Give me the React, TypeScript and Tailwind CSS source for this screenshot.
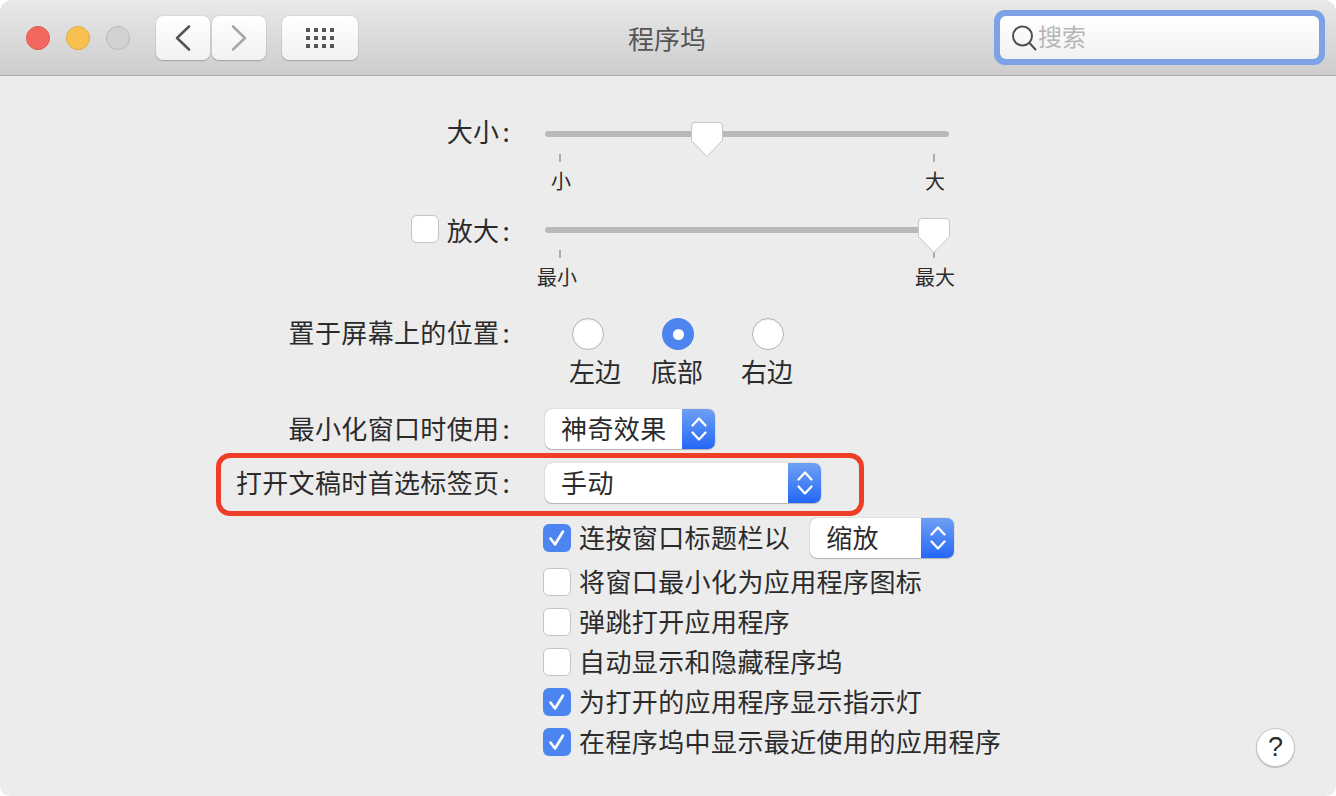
const Chevrons = () => (
  <svg width="18" height="30" viewBox="0 0 18 30" fill="none" stroke="white" strokeWidth="2.3" strokeLinecap="round" strokeLinejoin="round">
    <path d="M2.5 11.5 9 4.5l6.5 7" />
    <path d="M2.5 18.5 9 25.5l6.5-7" />
  </svg>
);

const Popup = ({ text, width }: { text: string; width: string }) => (
  <div className={`${width} h-10 flex rounded-[7px] bg-white shadow-[0_0_1px_rgba(0,0,0,0.45),0_1px_1px_rgba(0,0,0,0.2)] overflow-hidden`}>
    <div className="flex-1 pl-4 pb-1 flex items-center tracking-[0.4px]">{text}</div>
    <div className="w-[33px] flex items-center justify-center bg-gradient-to-b from-[#6f9ff3] to-[#2266f6]">
      <Chevrons />
    </div>
  </div>
);

const Checkbox = ({ checked }: { checked?: boolean }) =>
  checked ? (
    <div className="w-7 h-7 rounded-[6px] bg-[#4c84f0] flex items-center justify-center shrink-0">
      <svg width="20" height="20" viewBox="0 0 20 20" fill="none" stroke="white" strokeWidth="2.6" strokeLinecap="round" strokeLinejoin="round">
        <path d="M3.5 10.5 8 16.5 16 3.5" />
      </svg>
    </div>
  ) : (
    <div className="w-7 h-7 rounded-[6px] bg-white border border-[#c4c4c4] shrink-0" />
  );

const Radio = ({ checked }: { checked?: boolean }) =>
  checked ? (
    <div className="w-8 h-8 rounded-full bg-[#4c84f0] flex items-center justify-center">
      <div className="w-[11px] h-[11px] rounded-full bg-white" />
    </div>
  ) : (
    <div className="w-8 h-8 rounded-full bg-white border border-[#b4b4b4] shadow-[inset_0_1px_2px_rgba(0,0,0,0.08)]" />
  );

const Label = ({ text, className, children }: { text: string; className?: string; children?: React.ReactNode }) => (
  <div className={`w-[512px] shrink-0 h-[34px] flex items-center justify-end tracking-[0.35px] pr-[2px] ${className ?? ""}`}>
    {children}
    <span>{text}</span>
    <span className="ml-[3px]">:</span>
  </div>
);

const Thumb = ({ left }: { left: string }) => (
  <svg className={`absolute top-[5px] ${left}`} width="34" height="38" viewBox="0 0 34 38">
    <path
      d="M5 1.5h24a3.5 3.5 0 0 1 3.5 3.5v14.5L17 35.5 1.5 19.5V5A3.5 3.5 0 0 1 5 1.5Z"
      fill="white"
      stroke="#c6c6c6"
      strokeWidth="1"
    />
  </svg>
);

const SliderRow = ({
  label,
  left,
  right,
  textClass,
  labelClass,
  thumbLeft,
  check,
}: {
  label: string;
  left: string;
  right: string;
  textClass: string;
  labelClass?: string;
  thumbLeft: string;
  check?: boolean;
}) => (
  <div className="flex">
    <Label text={label} className={labelClass}>
      {check && <div className="mr-2"><Checkbox /></div>}
    </Label>
    <div className="relative ml-[33px] w-[404px]">
      <div className="mt-[15px] h-[6px] rounded-full bg-[#b9b9b9]" />
      <div className="mt-[17px] mx-[14px] flex justify-between">
        <div className="w-[2px] h-2 bg-[#ababab]" />
        <div className="w-[2px] h-2 bg-[#ababab]" />
      </div>
      <div className={`mt-[7px] flex justify-between text-[20px] leading-[24px] ${textClass}`}>
        <span>{left}</span>
        <span>{right}</span>
      </div>
      <Thumb left={thumbLeft} />
    </div>
  </div>
);

const CheckRow = ({ text, checked, children, className }: { text: string; checked?: boolean; children?: React.ReactNode; className: string }) => (
  <div className={`flex items-center pl-[543px] ${className}`}>
    <Checkbox checked={checked} />
    <span className="ml-2 pb-[2px] tracking-[0.4px] leading-[34px]">{text}</span>
    {children}
  </div>
);

const NavButton = ({ className, children }: { className: string; children: React.ReactNode }) => (
  <div className={`h-11 rounded-[7px] flex items-center justify-center bg-gradient-to-b from-white to-[#f1f1f1] shadow-[0_0_1px_rgba(0,0,0,0.45),0_1px_1px_rgba(0,0,0,0.2)] ${className}`}>
    {children}
  </div>
);

export default function App() {
  return (
    <div className="w-[1336px] h-[796px] bg-white font-['Noto_Sans_CJK_SC','Liberation_Sans',sans-serif] text-[26px] text-[#2b2b2b] overflow-hidden">
      <div className="relative h-full rounded-t-[12px] rounded-b-[10px] bg-[#ececec] overflow-hidden">
        {/* title bar */}
        <div className="relative h-[76px] flex items-center border-b border-[#aaaaaa] bg-gradient-to-b from-[#e9e9e9] to-[#cdcdcd]">
          <div className="flex gap-4 ml-[26px] mt-[1px]">
            <div className="w-6 h-6 rounded-full bg-[#f2675f] border border-[#dc5a52]" />
            <div className="w-6 h-6 rounded-full bg-[#f8c14f] border border-[#e0aa40]" />
            <div className="w-6 h-6 rounded-full bg-[#d2d2d2] border border-[#b9b9b9]" />
          </div>
          <div className="flex gap-[2px] ml-[26px] mt-[1px]">
            <NavButton className="w-[54px]">
              <svg width="18" height="28" viewBox="0 0 18 28" fill="none" stroke="#555555" strokeWidth="2.6" strokeLinecap="round" strokeLinejoin="round">
                <path d="M15 2.5 3 14l12 11.5" />
              </svg>
            </NavButton>
            <NavButton className="w-[54px]">
              <svg width="18" height="28" viewBox="0 0 18 28" fill="none" stroke="#a8a8a8" strokeWidth="2.6" strokeLinecap="round" strokeLinejoin="round">
                <path d="M3 2.5 15 14 3 25.5" />
              </svg>
            </NavButton>
          </div>
          <NavButton className="w-[76px] ml-4 mt-[1px]">
            <div className="grid grid-cols-4 gap-x-1 gap-y-1">
              {Array.from({ length: 12 }).map((_, i) => (
                <div key={i} className="w-1 h-1 bg-[#555555]" />
              ))}
            </div>
          </NavButton>
          <div className="absolute left-[628px] top-[19px] leading-[38px] text-[#555555]">程序坞</div>
          <div className="ml-auto mr-[11px] w-[331px] h-[55px] rounded-[11px] bg-[#7da3e6] p-[6px]">
            <div className="h-full rounded-[6px] bg-gradient-to-b from-white to-[#f2f2f2] flex items-center pl-[11px]">
              <svg width="26" height="28" viewBox="0 0 26 28" fill="none" stroke="#505050" strokeWidth="2" strokeLinecap="round">
                <circle cx="11.5" cy="12" r="9.5" />
                <path d="m18.5 19 6 6.5" />
              </svg>
              <span className="ml-[1px] pb-1 text-[24px] text-[#b6b6b6]">搜索</span>
            </div>
          </div>
        </div>

        {/* settings */}
        <div className="pt-[40px]">
          <SliderRow label="大小" left="小" right="大" textClass="pl-[6px] pr-[4px]" labelClass="-mt-[3px]" thumbLeft="left-[145px]" />
        </div>
        <div className="mt-[19px]">
          <SliderRow label="放大" check left="最小" right="最大" textClass="-ml-[8px] w-[418px]" thumbLeft="left-[372px]" />
        </div>

        <div className="flex mt-[29px]">
          <Label text="置于屏幕上的位置" className="-mt-[4px]" />
          <div className="ml-[31px] flex">
            {[
              { text: "左边", cls: "ml-[14px]" },
              { text: "底部", cls: "-ml-[2px]", checked: true },
              { text: "右边", cls: "-ml-[2px]" },
            ].map((r) => (
              <div key={r.text} className="w-[90px] flex flex-col items-center">
                <Radio checked={r.checked} />
                <span className={`mt-[2px] leading-[38px] ${r.cls}`}>{r.text}</span>
              </div>
            ))}
          </div>
        </div>

        <div className="flex items-center mt-[19px]">
          <Label text="最小化窗口时使用" className="-mt-[4px]" />
          <div className="ml-[33px]">
            <Popup text="神奇效果" width="w-[170px]" />
          </div>
        </div>

        <div className="relative flex items-center mt-[14px]">
          <Label text="打开文稿时首选标签页" className="-mt-[4px]" />
          <div className="ml-[33px]">
            <Popup text="手动" width="w-[276px]" />
          </div>
          <div className="absolute left-[216px] -top-[10px] w-[648px] h-[63px] rounded-[14px] border-[5px] border-[#ee3f26]" />
        </div>

        <CheckRow className="mt-[15px]" text="连按窗口标题栏以" checked>
          <div className="ml-5">
            <Popup text="缩放" width="w-[144px]" />
          </div>
        </CheckRow>
        <CheckRow className="mt-[6px]" text="将窗口最小化为应用程序图标" />
        <CheckRow className="mt-1" text="弹跳打开应用程序" />
        <CheckRow className="mt-1" text="自动显示和隐藏程序坞" />
        <CheckRow className="mt-1" text="为打开的应用程序显示指示灯" checked />
        <CheckRow className="mt-1" text="在程序坞中显示最近使用的应用程序" checked />

        <div className="absolute left-[1256px] top-[728px] w-[39px] h-[39px] rounded-full bg-white border border-[#c4c4c4] shadow-[0_1px_1px_rgba(0,0,0,0.2)] flex items-center justify-center text-[27px] font-['Liberation_Sans',sans-serif]">
          ?
        </div>
      </div>
    </div>
  );
}
